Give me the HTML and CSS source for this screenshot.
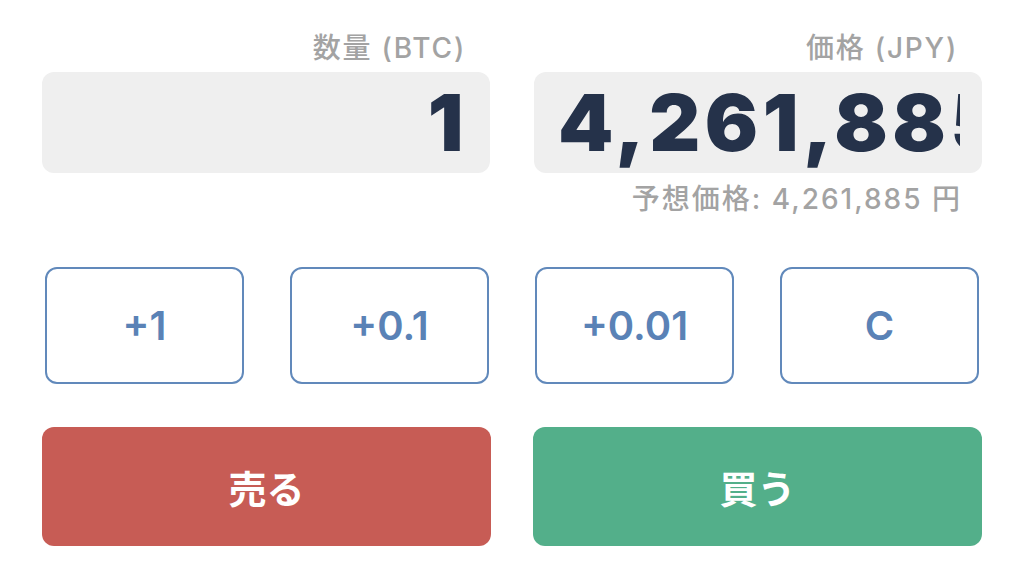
FILE: index.html
```html
<!DOCTYPE html>
<html lang="ja">
<head>
    <meta charset="UTF-8">
    <title>注文</title>
    <link rel="stylesheet" href="styles.css">
</head>
<body>
    <div class="order">
        <div class="fields">
            <div class="field">
                <div class="label">数量 (BTC)</div>
                <div class="box">
                    <div class="value">1</div>
                </div>
            </div>
            <div class="field">
                <div class="label">価格 (JPY)</div>
                <div class="box">
                    <div class="value value-long">4,261,885</div>
                </div>
                <div class="hint">予想価格: 4,261,885 円</div>
            </div>
        </div>
        <div class="steps">
            <button class="step">+1</button>
            <button class="step">+0.1</button>
            <button class="step">+0.01</button>
            <button class="step">C</button>
        </div>
        <div class="actions">
            <button class="action sell">売る</button>
            <button class="action buy">買う</button>
        </div>
    </div>
</body>
</html>
```

FILE: styles.css
```css
body{
    margin: 0;
    background-color: #fff;
    font-family: Inter, "Noto Sans CJK JP", sans-serif;
}
.order{
    width: 940px;
    margin: 0 auto;
    padding-top: 30px;
}
.fields{
    display: grid;
    grid-template-columns: repeat(2, minmax(0, 1fr));
    column-gap: 44px;
    align-items: start;
}
.field{
    display: flex;
    flex-direction: column;
    min-width: 0;
}
.label{
    font-size: 28px;
    font-weight: 500;
    line-height: 36px;
    letter-spacing: 1.8px;
    color: #a3a3a3;
    text-align: right;
    padding-right: 24px;
    margin-bottom: 6px;
}
.box{
    height: 101px;
    border-radius: 12px;
    background-color: #efefef;
    display: flex;
    align-items: center;
    padding: 0 22px 0 24px;
}
/* 長い数値は左から表示して右端で切る */
.value{
    flex: 1;
    min-width: 0;
    overflow: hidden;
    text-align: right;
    font-size: 79px;
    font-weight: 900;
    line-height: 101px;
    letter-spacing: 4.5px;
    color: #25324a;
    white-space: nowrap;
}
.value-long{
    text-align: left;
}
.hint{
    font-size: 28px;
    font-weight: 500;
    line-height: 32px;
    letter-spacing: 2px;
    margin-top: 10px;
    color: #a3a3a3;
    text-align: right;
    padding-right: 20px;
}
.steps{
    display: grid;
    grid-template-columns: repeat(4, minmax(0, 1fr));
    column-gap: 46px;
    margin-top: 52px;
    padding: 0 3px;
}
.step{
    height: 117px;
    border: 2px solid #6189bb;
    border-radius: 12px;
    background-color: #fff;
    color: #5a82b6;
    font-family: inherit;
    font-size: 40px;
    font-weight: 600;
}
.actions{
    display: grid;
    grid-template-columns: repeat(2, minmax(0, 1fr));
    column-gap: 42px;
    margin-top: 43px;
}
.action{
    height: 119px;
    border: none;
    border-radius: 12px;
    color: #fff;
    font-family: inherit;
    font-size: 38px;
    font-weight: 700;
}
.sell{
    background-color: #c75c55;
}
.buy{
    background-color: #53af8a;
}
```
